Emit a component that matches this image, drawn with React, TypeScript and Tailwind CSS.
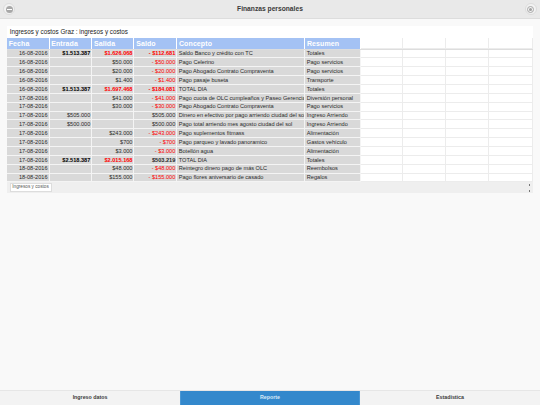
import React from 'react';

type Row = {
    fecha: string;
    entrada?: string;
    salida?: string;
    saldo: string;
    concepto: string;
    resumen: string;
    total?: boolean;
    saldoBlack?: boolean;
};

const rows: Row[] = [
    { fecha: '16-08-2016', entrada: '$1.513.387', salida: '$1.626.068', saldo: '- $112.681', concepto: 'Saldo Banco y crédito con TC', resumen: 'Totales', total: true },
    { fecha: '16-08-2016', salida: '$50.000', saldo: '- $50.000', concepto: 'Pago Celerino', resumen: 'Pago servicios' },
    { fecha: '16-08-2016', salida: '$20.000', saldo: '- $20.000', concepto: 'Pago Abogado Contrato Compraventa', resumen: 'Pago servicios' },
    { fecha: '16-08-2016', salida: '$1.400', saldo: '- $1.400', concepto: 'Pago pasaje buseta', resumen: 'Transporte' },
    { fecha: '16-08-2016', entrada: '$1.513.387', salida: '$1.697.468', saldo: '- $184.081', concepto: 'TOTAL DIA', resumen: 'Totales', total: true },
    { fecha: '17-08-2016', salida: '$41.000', saldo: '- $41.000', concepto: 'Pago cuota de OLC cumpleaños y Paseo Gerencia', resumen: 'Diversión personal' },
    { fecha: '17-08-2016', salida: '$30.000', saldo: '- $30.000', concepto: 'Pago Abogado Contrato Compraventa', resumen: 'Pago servicios' },
    { fecha: '17-08-2016', entrada: '$505.000', saldo: '$505.000', concepto: 'Dinero en efectivo por pago arriendo ciudad del sol', resumen: 'Ingreso Arriendo', saldoBlack: true },
    { fecha: '17-08-2016', entrada: '$500.000', saldo: '$500.000', concepto: 'Pago total arriendo mes agosto ciudad del sol', resumen: 'Ingreso Arriendo', saldoBlack: true },
    { fecha: '17-08-2016', salida: '$243.000', saldo: '- $243.000', concepto: 'Pago suplementos fitmass', resumen: 'Alimentación' },
    { fecha: '17-08-2016', salida: '$700', saldo: '- $700', concepto: 'Pago parqueo y lavado panoramico', resumen: 'Gastos vehículo' },
    { fecha: '17-08-2016', salida: '$3.000', saldo: '- $3.000', concepto: 'Botellón agua', resumen: 'Alimentación' },
    { fecha: '17-08-2016', entrada: '$2.518.387', salida: '$2.015.168', saldo: '$503.219', concepto: 'TOTAL DIA', resumen: 'Totales', total: true, saldoBlack: true },
    { fecha: '18-08-2016', salida: '$48.000', saldo: '- $48.000', concepto: 'Reintegro dinero pago de más OLC', resumen: 'Reembolsos' },
    { fecha: '18-08-2016', salida: '$155.000', saldo: '- $155.000', concepto: 'Pago flores aniversario de casado', resumen: 'Regalos' },
];

const gridCols = 'grid grid-cols-[42.5px_42.8px_42.2px_42.8px_128px_55.7px_42.5px_43px_42.2px_44.3px]';
const cell = 'bg-[#d9d9d9] border-r border-b border-[#f4f4f4] overflow-hidden whitespace-nowrap leading-[7px] pt-[0.8px]';
const num = `${cell} text-right pr-[1px]`;
const txt = `${cell} pl-[1.5px]`;
const blank = 'border-r border-b border-[#ececec]';
const head = 'bg-[#a4c2f4] border-r border-white pl-[1.7px] text-white font-bold text-[7px] leading-[11.5px] tracking-[0.1px]';

const App = () => {
    return (
        <div className="flex flex-col h-[405px] w-[540px] bg-[#f9f9f9] overflow-hidden font-['Liberation_Sans',Arial,sans-serif]">
            {/* top bar */}
            <div className="h-[19px] shrink-0 flex items-center justify-between px-[3px] bg-[#e9e9e9] border-b border-[#dddddd]">
                <div className="w-[12px] h-[12px] rounded-full bg-[#f2f2f2] border border-[#dcdcdc] flex items-center justify-center">
                    <div className="w-[7px] h-[7px] rounded-full bg-[#a8a8a8] flex items-center justify-center">
                        <div className="w-[5px] h-[1px] bg-white" />
                    </div>
                </div>
                <div className="text-[6.7px] font-bold text-[#3a3a3a]">Finanzas personales</div>
                <div className="w-[12px] h-[12px] rounded-full bg-[#f2f2f2] border border-[#dcdcdc] flex items-center justify-center">
                    <div className="w-[7px] h-[7px] rounded-full border border-[#a8a8a8] flex items-center justify-center">
                        <div className="w-[3px] h-[3px] rounded-full bg-[#a0a0a0]" />
                    </div>
                </div>
            </div>

            {/* sheet */}
            <div className="mt-[7px] mx-[7px] w-[526px] bg-[#efefef]">
                <div className="h-[11.5px] bg-white text-[6.3px] leading-[11.5px] text-[#222222] pl-[2.7px]">
                    Ingresos y costos Graz : ingresos y costos
                </div>
                <div className={`${gridCols} h-[12px] bg-white border-b border-[#dddddd]`}>
                    <div className={head}>Fecha</div>
                    <div className={head}>Entrada</div>
                    <div className={head}>Salida</div>
                    <div className={head}>Saldo</div>
                    <div className={head}>Concepto</div>
                    <div className={head}>Resumen</div>
                    <div className={blank} />
                    <div className={blank} />
                    <div className={blank} />
                    <div className={blank} />
                </div>
                <div className="bg-white">
                    {rows.map((r, i) => (
                        <div key={i} className={`${gridCols} h-[8.87px] text-[5.6px] text-[#2a2a2a]`}>
                            <div className={num}>{r.fecha}</div>
                            <div className={`${num} ${r.total ? 'font-bold text-black' : ''}`}>{r.entrada}</div>
                            <div className={`${num} ${r.total ? 'font-bold text-[#ff0000]' : ''}`}>{r.salida}</div>
                            <div className={`${num} ${r.saldoBlack ? '' : 'text-[#ff0000]'} ${r.total ? 'font-bold' : ''}`}>{r.saldo}</div>
                            <div className={txt}>{r.concepto}</div>
                            <div className={txt}>{r.resumen}</div>
                            <div className={blank} />
                            <div className={blank} />
                            <div className={blank} />
                            <div className={blank} />
                        </div>
                    ))}
                </div>
                {/* sheet tabs */}
                <div className="relative h-[11px] flex items-start pl-[2.5px] pt-[0.7px]">
                    <div className="h-[8.5px] w-[42px] bg-white border border-[#dddddd] text-[4.7px] leading-[6.5px] text-[#555555] text-center">
                        Ingresos y costos
                    </div>
                    <div className="absolute right-[3.5px] top-[1.5px] flex flex-col gap-[4px]">
                        <div className="w-[1px] h-[2px] bg-[#777777]" />
                        <div className="w-[1px] h-[2px] bg-[#777777]" />
                    </div>
                </div>
            </div>

            <div className="flex-1" />

            {/* bottom tabs */}
            <div className="h-[15px] shrink-0 grid grid-cols-3 text-[5.3px] font-bold bg-[#f3f3f3] border-t border-[#e6e6e6] text-[#3a3a3a]">
                <div className="flex items-center justify-center">Ingreso datos</div>
                <div className="flex items-center justify-center bg-[#3388cc] text-[#d6e8f7] border-x border-[#4a97d4]">Reporte</div>
                <div className="flex items-center justify-center">Estadística</div>
            </div>
        </div>
    );
};

export default App;
